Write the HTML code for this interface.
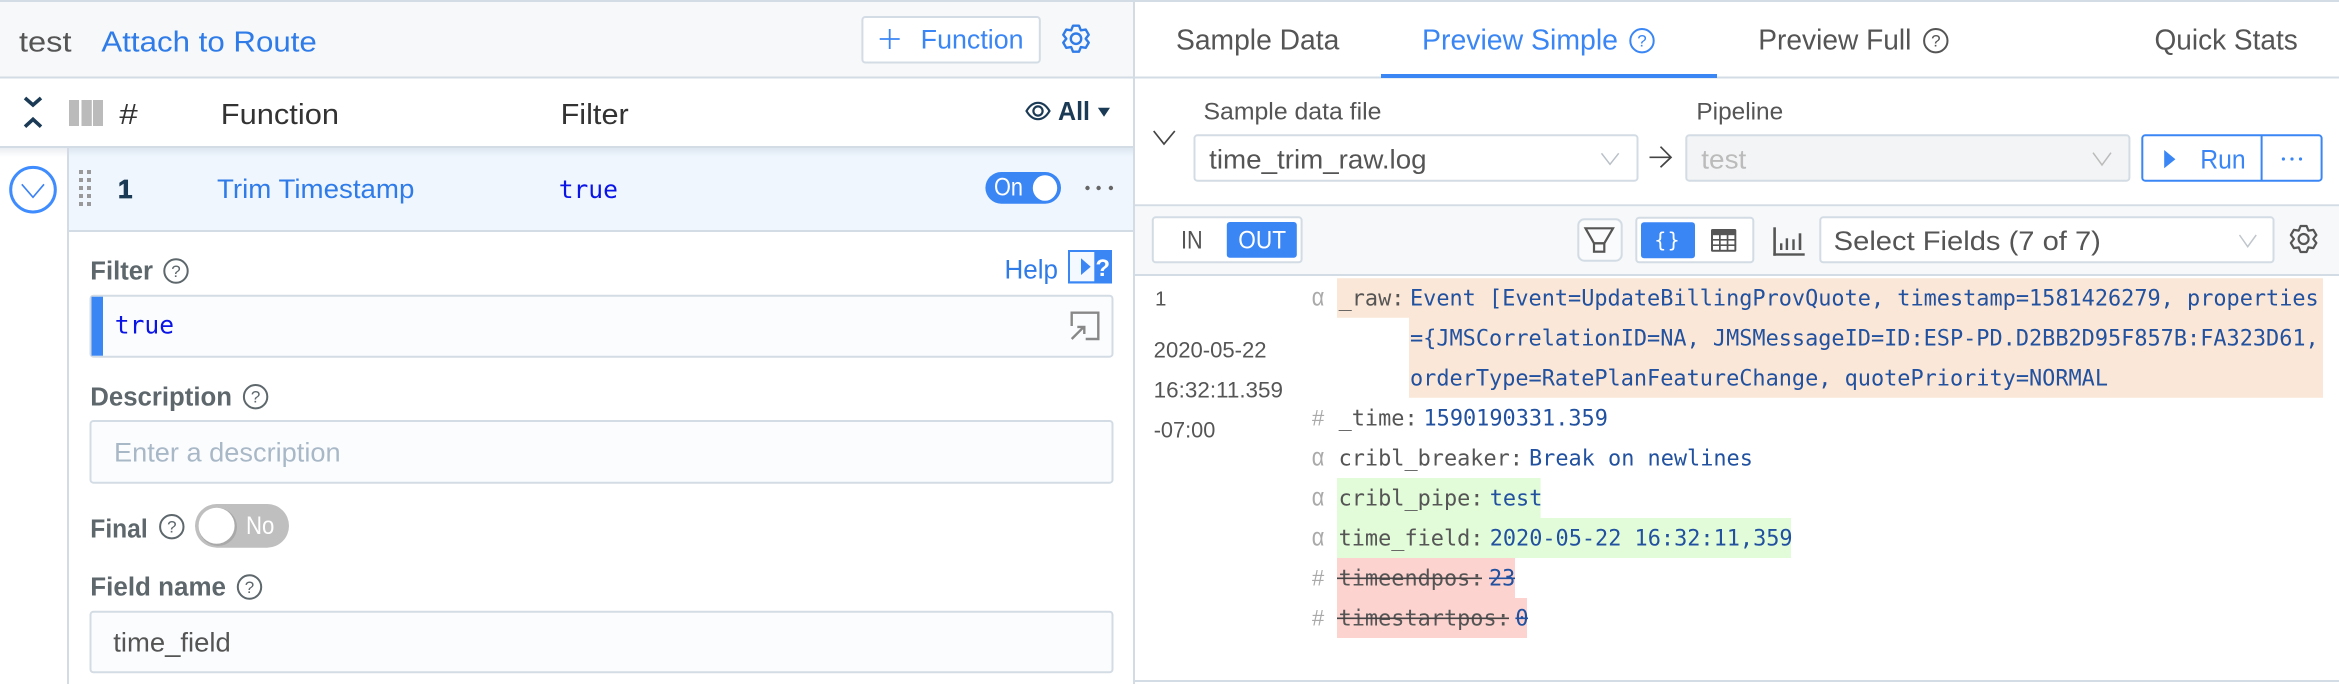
<!DOCTYPE html>
<html lang="en">
<head>
<meta charset="utf-8">
<title>Pipeline preview</title>
<style>
html,body{margin:0;padding:0;background:#fff;width:2339px;height:684px;overflow:hidden}
svg{display:block;position:absolute;left:0;top:0;filter:blur(.35px)}
text{font-family:"Liberation Sans",sans-serif;white-space:pre}
.m{font-family:"DejaVu Sans Mono",monospace;font-size:21.88px}
.k{fill:#555}
.v{fill:#21519f}
.t{fill:#aaa;font-family:"Liberation Sans",sans-serif}
.lbl{font-size:25.5px;font-weight:700;fill:#5d676c}
.blue{fill:#2f7be8}
.q{font-size:17px;text-anchor:middle}
</style>
</head>
<body>
<svg width="2339" height="684" viewBox="0 0 2339 684" xmlns="http://www.w3.org/2000/svg">
<defs>
<linearGradient id="sh" x1="0" y1="0" x2="0" y2="1"><stop offset="0" stop-color="#9fb0c0" stop-opacity=".22"/><stop offset="1" stop-color="#9fb0c0" stop-opacity="0"/></linearGradient>
<polygon id="gear" points="-3.26,-14.13 3.26,-14.13 5.25,-9.09 10.6,-9.89 13.87,-4.24 10.5,0 13.87,4.24 10.6,9.89 5.25,9.09 3.26,14.13 -3.26,14.13 -5.25,9.09 -10.6,9.89 -13.87,4.24 -10.5,0 -13.87,-4.24 -10.6,-9.89 -5.25,-9.09" fill="none" stroke-linejoin="round"/>
</defs>

<!-- LEFT PANEL backgrounds -->
<rect x="0" y="0" width="2339" height="2" fill="#d3dce4"/>
<rect x="0" y="2" width="1133" height="74.5" fill="#f7f8fa"/>
<rect x="0" y="76.5" width="2339" height="2" fill="#d3dce4"/>
<rect x="0" y="146" width="1133" height="2" fill="#d3dce4"/>
<rect x="69" y="148" width="1064" height="82" fill="#eff6fe"/>
<rect x="69" y="230" width="1064" height="2" fill="#d3dce4"/>
<rect x="0" y="148" width="1133" height="9" fill="url(#sh)"/>
<rect x="67" y="148" width="2" height="536" fill="#d3dce4"/>
<rect x="1133" y="2" width="2" height="682" fill="#d3dce4"/>

<!-- header row -->
<text x="19" y="51.7" font-size="29" fill="#555" textLength="52.5" lengthAdjust="spacingAndGlyphs">test</text>
<text x="101.4" y="51.7" font-size="29" class="blue" textLength="215.4" lengthAdjust="spacingAndGlyphs">Attach to Route</text>
<rect x="862.4" y="17" width="177.4" height="45.5" rx="3" fill="#fff" stroke="#d3dce4" stroke-width="2"/>
<path d="M889.7 29V49M879.7 39H899.7" stroke="#3a86f5" stroke-width="1.8" fill="none"/>
<text x="920.7" y="48.3" font-size="26.5" fill="#3a86f5" textLength="102.9" lengthAdjust="spacingAndGlyphs">Function</text>
<use href="#gear" transform="translate(1076 38.7) scale(.92)" stroke="#2f7be8" stroke-width="2.6"/>
<circle cx="1076" cy="38.7" r="5.2" fill="none" stroke="#2f7be8" stroke-width="2.4"/>

<!-- table header -->
<path d="M25 98L33 105L41 98M25 126.7L33 119.3L41 126.7" fill="none" stroke="#1b3a55" stroke-width="3.6"/>
<rect x="69" y="100" width="10" height="26" fill="#bbb"/>
<rect x="81.5" y="100" width="10.3" height="26" fill="#bbb"/>
<rect x="93" y="100" width="10" height="26" fill="#bbb"/>
<text x="119.4" y="124" font-size="29" fill="#333" textLength="18.4" lengthAdjust="spacingAndGlyphs">#</text>
<text x="220.8" y="124" font-size="29" fill="#333" textLength="118.2" lengthAdjust="spacingAndGlyphs">Function</text>
<text x="560.6" y="124" font-size="29" fill="#333" textLength="68.1" lengthAdjust="spacingAndGlyphs">Filter</text>
<path d="M1026.5 111C1030 105 1034 102.8 1038 102.8C1042 102.8 1046 105 1049.5 111C1046 117 1042 119.2 1038 119.2C1034 119.2 1030 117 1026.5 111Z" fill="none" stroke="#1b3a55" stroke-width="2.2"/>
<circle cx="1038" cy="111" r="4.6" fill="none" stroke="#1b3a55" stroke-width="2.2"/>
<text x="1058" y="120" font-size="26" font-weight="700" fill="#1b3a55" textLength="32" lengthAdjust="spacingAndGlyphs">All</text>
<polygon points="1097.9,107.7 1110,107.7 1104,116.7" fill="#1b3a55"/>

<!-- function row -->
<circle cx="33" cy="189.7" r="22.3" fill="#fff" stroke="#3f8cff" stroke-width="3"/>
<path d="M21.8 184.3L33 197.3L44 184.3" fill="none" stroke="#3b82f6" stroke-width="1.6"/>
<g fill="#999">
<rect x="79" y="170" width="4" height="4"/><rect x="87" y="170" width="4" height="4"/>
<rect x="79" y="178" width="4" height="4"/><rect x="87" y="178" width="4" height="4"/>
<rect x="79" y="186" width="4" height="4"/><rect x="87" y="186" width="4" height="4"/>
<rect x="79" y="194" width="4" height="4"/><rect x="87" y="194" width="4" height="4"/>
<rect x="79" y="202" width="4" height="4"/><rect x="87" y="202" width="4" height="4"/>
</g>
<text x="118" y="198" font-size="26" font-weight="700" fill="#1b3a55" stroke="#1b3a55" stroke-width=".8">1</text>
<text x="217" y="198" font-size="26.5" class="blue" textLength="197.4" lengthAdjust="spacingAndGlyphs">Trim Timestamp</text>
<text x="558.7" y="198" class="m" style="font-size:24.6px" fill="#0a14e6">true</text>
<rect x="985.4" y="172" width="75.6" height="31.7" rx="15.85" fill="#3a86f5"/>
<ellipse cx="1045" cy="188" rx="12.2" ry="12.8" fill="#fff"/>
<text x="994" y="195.7" font-size="25" fill="#fff" textLength="29" lengthAdjust="spacingAndGlyphs">On</text>
<g fill="#666"><circle cx="1087.5" cy="188" r="2.2"/><circle cx="1098.6" cy="188" r="2.2"/><circle cx="1110.9" cy="188" r="2.2"/></g>

<!-- Filter -->
<text x="90.3" y="279.3" class="lbl" textLength="62.7" lengthAdjust="spacingAndGlyphs">Filter</text>
<circle cx="176" cy="271" r="11.7" fill="none" stroke="#5d676c" stroke-width="2"/>
<text x="176" y="277" class="q" fill="#5d676c">?</text>
<text x="1004.5" y="278.3" font-size="26.5" class="blue" textLength="53.5" lengthAdjust="spacingAndGlyphs">Help</text>
<rect x="1068" y="250" width="44" height="33.5" fill="#3a86f5"/>
<rect x="1070" y="252" width="24.3" height="29.3" fill="#f4f8ff"/>
<polygon points="1081,258.3 1081,275 1090.7,266.7" fill="#3a86f5"/>
<text x="1102.7" y="276" font-size="24" font-weight="700" fill="#fff" text-anchor="middle">?</text>
<rect x="90.5" y="295.7" width="1022" height="61" rx="3" fill="#fbfcfe" stroke="#d3dce4" stroke-width="2"/>
<rect x="91.5" y="296.7" width="11.5" height="59" fill="#3a86f5"/>
<text x="114.8" y="333.3" class="m" style="font-size:24.6px" fill="#0a14e6">true</text>
<path d="M1071.7 326V312.7H1098.3V339H1085.7" fill="none" stroke="#888" stroke-width="2.4"/>
<path d="M1071.7 339L1084 326.7M1077.3 326.9H1084.3V334" fill="none" stroke="#888" stroke-width="2.4"/>

<!-- Description -->
<text x="90.3" y="405.7" class="lbl" textLength="141.7" lengthAdjust="spacingAndGlyphs">Description</text>
<circle cx="255.6" cy="396.7" r="11.7" fill="none" stroke="#5d676c" stroke-width="2"/>
<text x="255.6" y="402.7" class="q" fill="#5d676c">?</text>
<rect x="90.5" y="421" width="1022" height="61.7" rx="3" fill="#fbfcfe" stroke="#d3dce4" stroke-width="2"/>
<text x="114" y="461.7" font-size="26.5" fill="#a9b8c7" textLength="226.6" lengthAdjust="spacingAndGlyphs">Enter a description</text>

<!-- Final -->
<text x="90.3" y="537.7" class="lbl" textLength="57.4" lengthAdjust="spacingAndGlyphs">Final</text>
<circle cx="171.8" cy="526.7" r="11.7" fill="none" stroke="#5d676c" stroke-width="2"/>
<text x="171.8" y="532.7" class="q" fill="#5d676c">?</text>
<rect x="195" y="504" width="94" height="43.7" rx="21.85" fill="#bfbfbf"/>
<ellipse cx="218" cy="527" rx="19" ry="19" fill="#a9a9a9"/>
<circle cx="216.6" cy="525.7" r="18" fill="#fff"/>
<text x="246" y="534" font-size="25" fill="#fff" textLength="28.4" lengthAdjust="spacingAndGlyphs">No</text>

<!-- Field name -->
<text x="90.3" y="595.7" class="lbl" textLength="135.7" lengthAdjust="spacingAndGlyphs">Field name</text>
<circle cx="249.5" cy="587" r="11.7" fill="none" stroke="#5d676c" stroke-width="2"/>
<text x="249.5" y="593" class="q" fill="#5d676c">?</text>
<rect x="90.5" y="611.7" width="1022" height="60.6" rx="3" fill="#fbfcfe" stroke="#d3dce4" stroke-width="2"/>
<text x="113.3" y="651.7" font-size="26.5" fill="#555" textLength="117.5" lengthAdjust="spacingAndGlyphs">time_field</text>

<!-- RIGHT PANEL tabs -->
<text x="1176" y="49.3" font-size="29" fill="#555" textLength="163.3" lengthAdjust="spacingAndGlyphs">Sample Data</text>
<text x="1422" y="49.3" font-size="29" fill="#3a86f5" textLength="196" lengthAdjust="spacingAndGlyphs">Preview Simple</text>
<circle cx="1642" cy="40.7" r="11.7" fill="none" stroke="#3a86f5" stroke-width="2"/>
<text x="1642" y="46.7" class="q" fill="#3a86f5">?</text>
<text x="1758.3" y="49.3" font-size="29" fill="#555" textLength="153.1" lengthAdjust="spacingAndGlyphs">Preview Full</text>
<circle cx="1935.8" cy="40.7" r="11.7" fill="none" stroke="#555" stroke-width="2"/>
<text x="1935.8" y="46.7" class="q" fill="#555">?</text>
<text x="2154.5" y="49.3" font-size="29" fill="#555" textLength="143.3" lengthAdjust="spacingAndGlyphs">Quick Stats</text>
<rect x="1381" y="74" width="336" height="4" fill="#3a86f5"/>

<!-- config row -->
<path d="M1153.7 131L1164 144L1174.8 131" fill="none" stroke="#444" stroke-width="1.7"/>
<text x="1203.5" y="119.3" font-size="24.5" fill="#555" textLength="177.9" lengthAdjust="spacingAndGlyphs">Sample data file</text>
<rect x="1194.5" y="135.3" width="443" height="45.4" rx="3" fill="#fff" stroke="#d3dce4" stroke-width="2"/>
<text x="1209.2" y="168.3" font-size="27" fill="#555" textLength="217.4" lengthAdjust="spacingAndGlyphs">time_trim_raw.log</text>
<path d="M1601.5 153.3L1610 164.3L1618.7 153.3" fill="none" stroke="#b9c0c8" stroke-width="1.5"/>
<path d="M1649.5 157.3H1671M1660.5 146.7L1671 157.3L1660.5 167.3" fill="none" stroke="#444" stroke-width="1.7"/>
<text x="1696.4" y="119.3" font-size="24.5" fill="#555" textLength="86.8" lengthAdjust="spacingAndGlyphs">Pipeline</text>
<rect x="1686.3" y="135.3" width="443.1" height="45.4" rx="3" fill="#f3f4f5" stroke="#d3dce4" stroke-width="2"/>
<text x="1701.3" y="168.3" font-size="27" fill="#bbb" textLength="45" lengthAdjust="spacingAndGlyphs">test</text>
<path d="M2093 152.7L2102 165L2111 152.7" fill="none" stroke="#bbb" stroke-width="1.5"/>
<rect x="2142.3" y="135.3" width="179.3" height="45.4" rx="3" fill="#fff" stroke="#3a86f5" stroke-width="2"/>
<rect x="2260.6" y="135" width="2" height="46" fill="#3a86f5"/>
<polygon points="2164.2,150 2164.2,168.3 2175.4,159.2" fill="#3a86f5"/>
<text x="2200.3" y="168.3" font-size="27" fill="#3a86f5" textLength="45.4" lengthAdjust="spacingAndGlyphs">Run</text>
<g fill="#3a86f5"><circle cx="2283.4" cy="159" r="1.6"/><circle cx="2292" cy="159" r="1.6"/><circle cx="2300.5" cy="159" r="1.6"/></g>

<!-- toolbar -->
<rect x="1135" y="204.3" width="1204" height="2" fill="#d3dce4"/>
<rect x="1135" y="206.3" width="1204" height="68" fill="#f6f8fa"/>
<rect x="1135" y="274" width="1204" height="2" fill="#d3dce4"/>
<rect x="1152.8" y="217.3" width="148.8" height="45" rx="3" fill="#fff" stroke="#d3dce4" stroke-width="2"/>
<rect x="1226.8" y="222" width="70" height="35.7" rx="3" fill="#3a86f5"/>
<text x="1181" y="248.3" font-size="25" fill="#555" textLength="21.7" lengthAdjust="spacingAndGlyphs">IN</text>
<text x="1238.3" y="248.3" font-size="25" fill="#fff" textLength="47.8" lengthAdjust="spacingAndGlyphs">OUT</text>
<rect x="1578.3" y="219.3" width="43.4" height="41.4" rx="6" fill="#fafbfc" stroke="#d3dce4" stroke-width="2"/>
<path d="M1585.5 228.3H1613L1604.3 243.3H1594Z" fill="none" stroke="#555" stroke-width="2.2"/>
<rect x="1594" y="243.3" width="10.3" height="8.4" fill="none" stroke="#555" stroke-width="2.2"/>
<rect x="1636.3" y="217.7" width="117" height="44.6" rx="3" fill="#fff" stroke="#d3dce4" stroke-width="2"/>
<rect x="1641" y="222.3" width="54" height="36" rx="3" fill="#3a86f5"/>
<text x="1660.3" y="247" class="m" text-anchor="middle" fill="#fff" style="font-size:20px">{</text>
<text x="1673.7" y="247" class="m" text-anchor="middle" fill="#fff" style="font-size:20px">}</text>
<rect x="1711" y="229" width="25.3" height="22.7" rx="1.5" fill="#555"/>
<g fill="#fff">
<rect x="1713" y="235.2" width="6" height="3.8"/><rect x="1720.7" y="235.2" width="6" height="3.8"/><rect x="1728.4" y="235.2" width="6" height="3.8"/>
<rect x="1713" y="240.6" width="6" height="3.8"/><rect x="1720.7" y="240.6" width="6" height="3.8"/><rect x="1728.4" y="240.6" width="6" height="3.8"/>
<rect x="1713" y="246" width="6" height="3.8"/><rect x="1720.7" y="246" width="6" height="3.8"/><rect x="1728.4" y="246" width="6" height="3.8"/>
</g>
<g fill="#555">
<rect x="1773.3" y="227.3" width="2.6" height="28.4"/><rect x="1773.3" y="253.3" width="31.4" height="2.4"/>
<rect x="1780" y="243.3" width="2.4" height="6.7"/><rect x="1785.7" y="238.3" width="2.4" height="11.7"/><rect x="1792.3" y="239.3" width="2.4" height="10.7"/><rect x="1798.7" y="233.3" width="2.6" height="16.7"/>
</g>
<rect x="1820.3" y="217.3" width="453.2" height="45" rx="3" fill="#fff" stroke="#d3dce4" stroke-width="2"/>
<text x="1833.7" y="250" font-size="27" fill="#555" textLength="267.2" lengthAdjust="spacingAndGlyphs">Select Fields (7 of 7)</text>
<path d="M2239.5 235L2247.7 246.7L2256.2 235" fill="none" stroke="#c0c6cc" stroke-width="1.5"/>
<use href="#gear" transform="translate(2303.6 239) scale(.92)" stroke="#555" stroke-width="2.4"/>
<circle cx="2303.6" cy="239" r="5" fill="none" stroke="#555" stroke-width="2.2"/>

<!-- data rows backgrounds -->
<path d="M1337 278.3H2323V397.7H1409V317.7H1337Z" fill="#fbe7d7"/>
<path d="M1337 478H1540.6V518H1791V558H1337Z" fill="#e2fbd8"/>
<path d="M1337 558H1515V598H1527V638H1337Z" fill="#fdd3cf"/>

<!-- event meta -->
<text x="1155" y="305.7" font-size="20.5" fill="#555">1</text>
<text x="1153.7" y="357.7" font-size="22" fill="#555" textLength="112.9" lengthAdjust="spacingAndGlyphs">2020-05-22</text>
<text x="1153.7" y="397.7" font-size="22" fill="#555" textLength="129.3" lengthAdjust="spacingAndGlyphs">16:32:11.359</text>
<text x="1153.7" y="437.7" font-size="22" fill="#555" textLength="61.6" lengthAdjust="spacingAndGlyphs">-07:00</text>

<!-- field types -->
<text x="1311.8" y="305.7" class="t" style="font-size:26px" textLength="12.6" lengthAdjust="spacingAndGlyphs">&#945;</text>
<text x="1312" y="425.5" class="t" style="font-size:22px">#</text>
<text x="1311.8" y="465.5" class="t" style="font-size:26px" textLength="12.6" lengthAdjust="spacingAndGlyphs">&#945;</text>
<text x="1311.8" y="505.5" class="t" style="font-size:26px" textLength="12.6" lengthAdjust="spacingAndGlyphs">&#945;</text>
<text x="1311.8" y="545.5" class="t" style="font-size:26px" textLength="12.6" lengthAdjust="spacingAndGlyphs">&#945;</text>
<text x="1312" y="585.5" class="t" style="font-size:22px">#</text>
<text x="1312" y="625.5" class="t" style="font-size:22px">#</text>

<!-- fields -->
<text x="1338.6" y="305.7" class="m k">_raw:</text>
<text x="1410" y="305.7" class="m v">Event [Event=UpdateBillingProvQuote, timestamp=1581426279, properties</text>
<text x="1410" y="345.7" class="m v">={JMSCorrelationID=NA, JMSMessageID=ID:ESP-PD.D2BB2D95F857B:FA323D61,</text>
<text x="1410" y="385.7" class="m v">orderType=RatePlanFeatureChange, quotePriority=NORMAL</text>
<text x="1338.6" y="425.5" class="m k">_time:</text>
<text x="1423.5" y="425.5" class="m v">1590190331.359</text>
<text x="1338.6" y="465.5" class="m k">cribl_breaker:</text>
<text x="1529" y="465.5" class="m v">Break on newlines</text>
<text x="1338.6" y="505.5" class="m k">cribl_pipe:</text>
<text x="1489.7" y="505.5" class="m v">test</text>
<text x="1338.6" y="545.5" class="m k">time_field:</text>
<text x="1489.7" y="545.5" class="m v">2020-05-22 16:32:11,359</text>
<text x="1338.6" y="585.5" class="m k">timeendpos:</text>
<text x="1489" y="585.5" class="m v">23</text>
<text x="1338.6" y="625.5" class="m k">timestartpos:</text>
<text x="1515.4" y="625.5" class="m v">0</text>
<path d="M1337 578.3H1482M1337 618.3H1509" stroke="#444" stroke-width="1.6"/>
<path d="M1489 578.3H1515M1515.4 618.3H1528" stroke="#21519f" stroke-width="1.6"/>

<rect x="1135" y="680" width="1204" height="2" fill="#d3dce4"/>
</svg>
</body>
</html>
